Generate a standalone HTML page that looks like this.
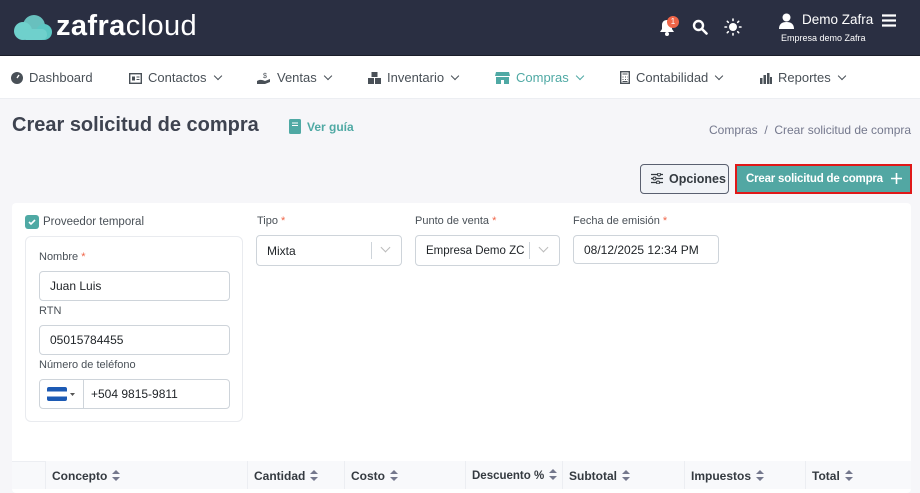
<!DOCTYPE html>
<html><head><meta charset="utf-8"><style>
*{box-sizing:border-box;margin:0;padding:0}
body{width:920px;height:489px;overflow:hidden;background:#f6f6f9;font-family:"Liberation Sans",sans-serif;color:#495057;position:relative}
.a{position:absolute}
.hdr{left:0;top:0;width:920px;height:56px;background:#2a2f42;border-bottom:1px solid #1a1d29}
.nav{left:0;top:56px;width:920px;height:43px;background:#fff;border-bottom:1px solid #eceef2}
.ni{position:absolute;top:14px;font-size:13px;color:#495057;white-space:nowrap}
.ni svg{vertical-align:-2px;margin-right:6px}
.chev{display:inline-block;width:6px;height:6px;border-right:1.4px solid #495057;border-bottom:1.4px solid #495057;transform:rotate(45deg);margin-left:8px;position:relative;top:-3px}
.sch{position:absolute;width:7px;height:7px;border-right:1.2px solid #bbb;border-bottom:1.2px solid #bbb;transform:rotate(45deg)}
.card{left:12px;top:203px;width:899px;height:290px;background:#fff;border-radius:4px}
.lbl{font-size:11px;color:#495057}
.req{color:#f06548}
.inp{position:absolute;background:#fff;border:1px solid #ced4da;border-radius:4px;font-size:12px;color:#212529;padding-left:10px;display:flex;align-items:center;white-space:nowrap}
.th{position:absolute;top:461px;height:28px;background:#f8f9fb;border-left:1px solid #eceef2;font-size:12px;font-weight:bold;color:#343a40;padding:8px 0 0 6px;white-space:nowrap}
.sort{display:inline-block;margin-left:5px;vertical-align:-1px}
</style></head><body>
<div class="a hdr"></div>
<svg class="a" style="left:12px;top:14px" width="42" height="28" viewBox="0 0 42 28"><circle cx="11" cy="17" r="9" fill="#6fd0cc"/><circle cx="22" cy="12" r="11" fill="#6fd0cc" opacity=".9"/><circle cx="32" cy="18" r="8" fill="#5cc7c3"/><rect x="9" y="15" width="26" height="11" rx="5" fill="#6fd0cc"/></svg>
<div class="a" style="left:56px;top:10px;font-size:29px;color:#fff;letter-spacing:.4px"><b>zafra</b>cloud</div>
<svg class="a" style="left:659px;top:19px" width="16" height="17" viewBox="0 0 16 17"><path d="M8 1c-3 0-5 2-5 5v4l-2 3h14l-2-3V6c0-3-2-5-5-5z" fill="#fff"/><circle cx="8" cy="15" r="2" fill="#fff"/></svg>
<div class="a" style="left:667px;top:16px;width:12px;height:12px;border-radius:50%;background:#f06548;color:#fff;font-size:8px;text-align:center;line-height:12px">1</div>
<svg class="a" style="left:692px;top:19px" width="16" height="16" viewBox="0 0 16 16"><circle cx="6.5" cy="6.5" r="4.5" stroke="#fff" stroke-width="2.4" fill="none"/><path d="M10 10l4.5 4.5" stroke="#fff" stroke-width="2.6" stroke-linecap="round"/></svg>
<svg class="a" style="left:724px;top:18px" width="18" height="18" viewBox="0 0 18 18"><circle cx="9" cy="9" r="4" fill="#fff"/><g stroke="#fff" stroke-width="1.6" stroke-linecap="round"><path d="M9 1v1.5M9 15.5V17M1 9h1.5M15.5 9H17M3.3 3.3l1 1M13.7 13.7l1 1M3.3 14.7l1-1M13.7 4.3l1-1"/></g></svg>
<svg class="a" style="left:779px;top:13px" width="15" height="16" viewBox="0 0 15 16"><circle cx="7.5" cy="4.5" r="4" fill="#fff"/><path d="M0 16c0-5 3-7 7.5-7S15 11 15 16z" fill="#fff"/></svg>
<div class="a" style="left:802px;top:12px;font-size:13.5px;color:#fff">Demo Zafra</div>
<div class="a" style="left:781px;top:33px;font-size:9px;color:#fff">Empresa demo Zafra</div>
<svg class="a" style="left:882px;top:14px" width="14" height="13" viewBox="0 0 14 13"><path d="M0 1.5h14M0 6.5h14M0 11.5h14" stroke="#fff" stroke-width="2.2"/></svg>

<div class="a nav"></div>
<div class="ni" style="left:11px;top:70px"><svg width="12" height="12" viewBox="0 0 12 12"><circle cx="6" cy="6" r="6" fill="#495057"/><path d="M6 6L8 3" stroke="#fff" stroke-width="1.4"/></svg>Dashboard</div>
<div class="ni" style="left:129px;top:70px"><svg width="13" height="11" viewBox="0 0 13 11"><rect x=".7" y=".7" width="11.6" height="9.6" fill="none" stroke="#495057" stroke-width="1.4"/><rect x="3" y="3.5" width="3" height="4" fill="#495057"/><path d="M7.5 4h3M7.5 6.5h3" stroke="#495057"/></svg>Contactos<span class="chev"></span></div>
<div class="ni" style="left:257px;top:70px"><svg width="14" height="12" viewBox="0 0 14 12"><path d="M0 9c3-2 6-1 8 0l5-2v3l-5 2H0z" fill="#495057"/><text x="6" y="6" font-size="7" fill="#495057">$</text></svg>Ventas<span class="chev"></span></div>
<div class="ni" style="left:368px;top:70px"><svg width="13" height="12" viewBox="0 0 13 12"><rect x="0" y="6" width="6" height="6" fill="#495057"/><rect x="7" y="6" width="6" height="6" fill="#495057"/><rect x="3.5" y="0" width="6" height="5" fill="#495057"/></svg>Inventario<span class="chev"></span></div>
<div class="ni" style="left:495px;top:70px;color:#4fa9a4"><svg width="15" height="12" viewBox="0 0 15 12"><path d="M1 0h13l1 4H0z" fill="#4fa9a4"/><path d="M1 5h13v7H9V8H6v4H1z" fill="#4fa9a4"/></svg>Compras<span class="chev" style="border-color:#4fa9a4"></span></div>
<div class="ni" style="left:620px;top:70px"><svg width="10" height="13" viewBox="0 0 10 13"><rect x=".7" y=".7" width="8.6" height="11.6" fill="none" stroke="#495057" stroke-width="1.4"/><path d="M2.5 3h5M2.5 6h1M5 6h1M7 6h.5M2.5 8.5h1M5 8.5h1M7 8.5h.5M2.5 10.5h5" stroke="#495057"/></svg>Contabilidad<span class="chev"></span></div>
<div class="ni" style="left:760px;top:70px"><svg width="12" height="11" viewBox="0 0 12 11"><rect x="0" y="5" width="2.5" height="6" fill="#495057"/><rect x="3.5" y="2" width="2.5" height="9" fill="#495057"/><rect x="7" y="0" width="2.5" height="11" fill="#495057"/><rect x="10" y="4" width="2" height="7" fill="#495057"/></svg>Reportes<span class="chev"></span></div>

<div class="a" style="left:12px;top:114px;font-size:20px;font-weight:bold;color:#3e4350">Crear solicitud de compra</div>
<svg class="a" style="left:289px;top:119px" width="12" height="15" viewBox="0 0 12 15"><rect width="12" height="15" rx="1.5" fill="#4fa9a4"/><path d="M3 4h6M3 6.5h6" stroke="#fff"/></svg>
<div class="a" style="left:307px;top:120px;font-size:12px;font-weight:bold;color:#4fa9a4">Ver guía</div>
<div class="a" style="left:709px;top:123px;font-size:12px;color:#74788d;white-space:nowrap">Compras &nbsp;/&nbsp; Crear solicitud de compra</div>

<div class="a" style="left:640px;top:164px;width:89px;height:30px;border:1px solid #5a6070;border-radius:4px;background:#f1f3f7;font-size:12.5px;font-weight:bold;color:#343a40;padding:7px 0 0 28px">Opciones</div>
<svg class="a" style="left:651px;top:173px" width="12" height="11" viewBox="0 0 12 11"><path d="M0 1.5h12M0 5.5h12M0 9.5h12" stroke="#343a40" stroke-width="1.2"/><circle cx="8" cy="1.5" r="1.5" fill="#f1f3f7" stroke="#343a40"/><circle cx="3.5" cy="5.5" r="1.5" fill="#f1f3f7" stroke="#343a40"/><circle cx="7" cy="9.5" r="1.5" fill="#f1f3f7" stroke="#343a40"/></svg>
<div class="a" style="left:735px;top:164px;width:177px;height:30px;border:2px solid #e01818;background:#52a7a3"></div>
<div class="a" style="left:746px;top:173px;color:#fff;font-size:11.5px;font-weight:bold;white-space:nowrap;letter-spacing:-.2px">Crear solicitud de compra</div>
<svg class="a" style="left:891px;top:173px" width="11" height="11" viewBox="0 0 11 11"><path d="M5.5 0v11M0 5.5h11" stroke="#fff" stroke-width="1.6"/></svg>

<div class="a card"></div>
<div class="a" style="left:25px;top:215px;width:14px;height:14px;border-radius:3px;background:#4fa9a4"></div>
<svg class="a" style="left:28px;top:218px" width="8" height="8" viewBox="0 0 8 8"><path d="M1 4l2 2 4-4" stroke="#fff" stroke-width="1.6" fill="none"/></svg>
<div class="a lbl" style="left:43px;top:216px;font-size:11.5px">Proveedor temporal</div>
<div class="a" style="left:25px;top:236px;width:218px;height:186px;border:1px solid #e9ebef;border-radius:6px"></div>
<div class="a lbl" style="left:39px;top:251px">Nombre <span class="req">*</span></div>
<div class="inp" style="left:39px;top:271px;width:191px;height:30px">Juan Luis</div>
<div class="a lbl" style="left:39px;top:305px">RTN</div>
<div class="inp" style="left:39px;top:325px;width:191px;height:30px">05015784455</div>
<div class="a lbl" style="left:39px;top:359px">Número de teléfono</div>
<div class="inp" style="left:39px;top:379px;width:191px;height:30px;padding-left:51px">+504 9815-9811</div>
<div class="a" style="left:83px;top:380px;width:1px;height:28px;background:#ced4da"></div>
<svg class="a" style="left:47px;top:387px" width="30" height="14" viewBox="0 0 30 14"><rect width="20" height="14" rx="2" fill="#1c5ab4"/><rect y="4.5" width="20" height="5" fill="#fff"/><path d="M23 6h5l-2.5 3z" fill="#555"/></svg>

<div class="a lbl" style="left:257px;top:215px">Tipo <span class="req">*</span></div>
<div class="inp" style="left:256px;top:235px;width:146px;height:31px">Mixta</div>
<div class="a" style="left:371px;top:242px;width:1px;height:17px;background:#ced4da"></div>
<div class="sch" style="left:382px;top:244px"></div>
<div class="a lbl" style="left:415px;top:215px">Punto de venta <span class="req">*</span></div>
<div class="inp" style="left:415px;top:235px;width:145px;height:31px;font-size:11.5px">Empresa Demo ZC</div>
<div class="a" style="left:529px;top:242px;width:1px;height:17px;background:#ced4da"></div>
<div class="sch" style="left:540px;top:244px"></div>
<div class="a lbl" style="left:573px;top:215px">Fecha de emisión <span class="req">*</span></div>
<div class="inp" style="left:573px;top:235px;width:146px;height:29px">08/12/2025 12:34 PM</div>

<div class="a" style="left:12px;top:461px;width:899px;height:28px;background:#f8f9fb;border-top:1px solid #eceef2"></div>
<div class="th" style="left:45px;width:202px">Concepto<svg class="sort" width="8" height="11" viewBox="0 0 8 11"><path d="M4 0l4 4H0zM4 11l4-4H0z" fill="#74788d"/></svg></div>
<div class="th" style="left:247px;width:97px">Cantidad<svg class="sort" width="8" height="11" viewBox="0 0 8 11"><path d="M4 0l4 4H0zM4 11l4-4H0z" fill="#74788d"/></svg></div>
<div class="th" style="left:344px;width:121px">Costo<svg class="sort" width="8" height="11" viewBox="0 0 8 11"><path d="M4 0l4 4H0zM4 11l4-4H0z" fill="#74788d"/></svg></div>
<div class="th" style="left:465px;width:97px;font-size:11.5px">Descuento %<svg class="sort" width="8" height="11" viewBox="0 0 8 11"><path d="M4 0l4 4H0zM4 11l4-4H0z" fill="#74788d"/></svg></div>
<div class="th" style="left:562px;width:122px">Subtotal<svg class="sort" width="8" height="11" viewBox="0 0 8 11"><path d="M4 0l4 4H0zM4 11l4-4H0z" fill="#74788d"/></svg></div>
<div class="th" style="left:684px;width:121px">Impuestos<svg class="sort" width="8" height="11" viewBox="0 0 8 11"><path d="M4 0l4 4H0zM4 11l4-4H0z" fill="#74788d"/></svg></div>
<div class="th" style="left:805px;width:106px">Total<svg class="sort" width="8" height="11" viewBox="0 0 8 11"><path d="M4 0l4 4H0zM4 11l4-4H0z" fill="#74788d"/></svg></div>
</body></html>
